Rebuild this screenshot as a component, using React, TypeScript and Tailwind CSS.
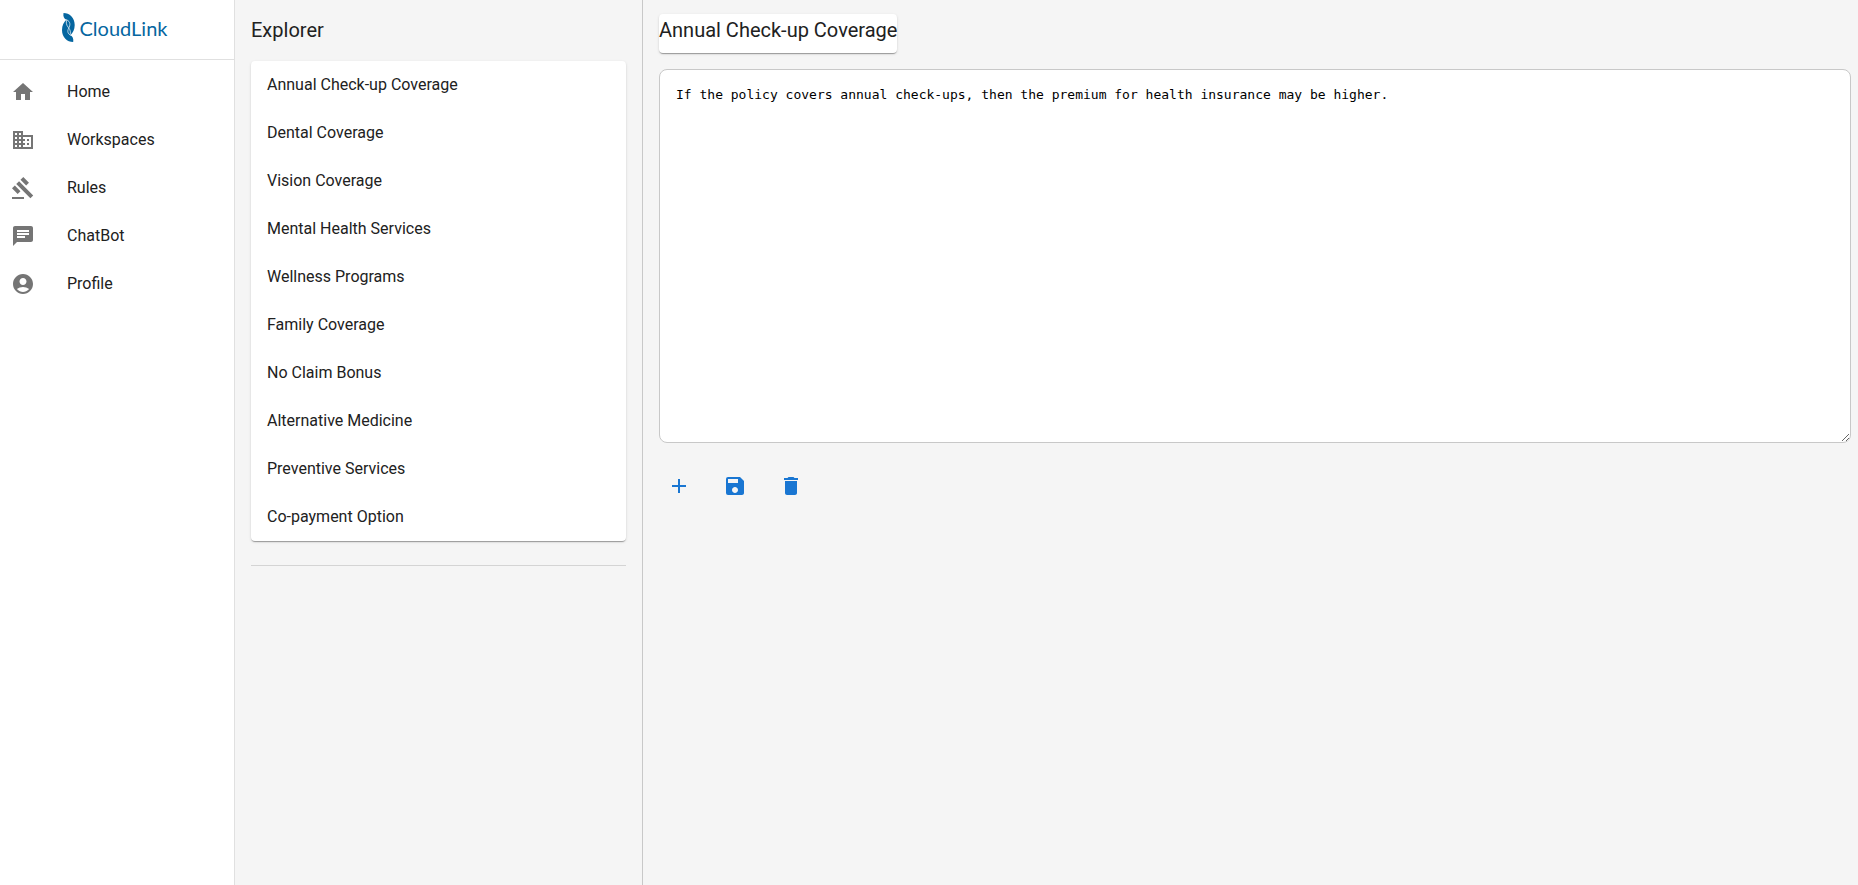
import { useState } from "react";
import type { IconType } from "react-icons";
import {
  MdAccountCircle,
  MdAdd,
  MdBusiness,
  MdChat,
  MdDelete,
  MdGavel,
  MdHome,
  MdSave,
} from "react-icons/md";

const navItems: { label: string; Icon: IconType }[] = [
  { label: "Home", Icon: MdHome },
  { label: "Workspaces", Icon: MdBusiness },
  { label: "Rules", Icon: MdGavel },
  { label: "ChatBot", Icon: MdChat },
  { label: "Profile", Icon: MdAccountCircle },
];

const rules = [
  "Annual Check-up Coverage",
  "Dental Coverage",
  "Vision Coverage",
  "Mental Health Services",
  "Wellness Programs",
  "Family Coverage",
  "No Claim Bonus",
  "Alternative Medicine",
  "Preventive Services",
  "Co-payment Option",
];

const actions: { label: string; Icon: IconType }[] = [
  { label: "Add rule", Icon: MdAdd },
  { label: "Save rule", Icon: MdSave },
  { label: "Delete rule", Icon: MdDelete },
];

function Logo() {
  return (
    <a href="#" className="flex items-center gap-1 text-[#0566a0]">
      <svg viewBox="0 0 13 29" className="h-[29px] w-[13px]" aria-hidden="true">
        <path
          fill="currentColor"
          d="M1.500 0C7.500 0 12.700 4.500 12.700 12C12.700 16.500 10.800 20 8.400 22.200C10.600 23.300 11.800 25.500 11.200 29C5.200 29 0 24.500 0 17C0 12.500 1.900 9 4.300 6.800C2.100 5.700 .9 3.500 1.500 0Z"
        />
        <path
          fill="none"
          stroke="white"
          strokeWidth=".7"
          d="M3.800 6.600C7.500 7.600 8.800 10.500 7.200 14.200C5.300 17.500 5 20.500 8.900 22.400M4.700 7.200C3.900 9.500 4.300 12 6.400 14.500C8.500 17 8.800 19.500 8 21.800"
        />
      </svg>
      <span className="font-['Lato',sans-serif] text-[20px] leading-6">CloudLink</span>
    </a>
  );
}

export default function App() {
  const [selected, setSelected] = useState(rules[0]);
  const [text, setText] = useState(
    "If the policy covers annual check-ups, then the premium for health insurance may be higher.",
  );

  return (
    <div className="flex min-h-screen bg-[#f5f5f5] font-['Roboto',sans-serif] text-base text-[#212121]">
      <aside className="w-[235px] shrink-0 border-r border-[#e0e0e0] bg-white">
        <header className="flex h-[60px] items-center justify-center border-b border-[#e0e0e0] pb-1 pr-1">
          <Logo />
        </header>
        <nav className="py-2">
          <ul>
            {navItems.map(({ label, Icon }) => (
              <li key={label}>
                <a href="#" className="flex h-12 items-center gap-8 px-[11px]">
                  <Icon size={24} className="text-[#757575]" />
                  {label}
                </a>
              </li>
            ))}
          </ul>
        </nav>
      </aside>

      <section className="w-[408px] shrink-0 border-r border-[#c8c8c8] px-4 pt-[14px]">
        <h2 className="text-xl leading-8">Explorer</h2>
        <ul className="mt-[15px] overflow-hidden rounded bg-white shadow-[0_2px_1px_-1px_rgba(0,0,0,0.2),0_1px_1px_0_rgba(0,0,0,0.14),0_1px_3px_0_rgba(0,0,0,0.12)]">
          {rules.map((rule) => (
            <li key={rule}>
              <button
                type="button"
                onClick={() => setSelected(rule)}
                className="flex h-12 w-full items-center px-4 text-left"
              >
                {rule}
              </button>
            </li>
          ))}
        </ul>
        <hr className="mt-6 border-[#d4d4d4]" />
      </section>

      <main className="min-w-0 flex-1 pl-4 pr-[7px] pt-[14px]">
        <h1 className="w-fit rounded bg-white pb-[7px] text-xl leading-8 shadow-[0_2px_1px_-1px_rgba(0,0,0,0.2),0_1px_1px_0_rgba(0,0,0,0.14),0_1px_3px_0_rgba(0,0,0,0.12)]">
          {selected}
        </h1>
        <textarea
          aria-label="Rule text"
          spellCheck={false}
          value={text}
          onChange={(event) => setText(event.target.value)}
          className="mt-4 block h-[374px] w-full resize rounded-lg border border-[#c8c8c8] bg-white p-4 font-['DejaVu_Sans_Mono',monospace] text-[13px] leading-[18px] text-black outline-none"
        />
        <div className="mt-[23px] flex gap-4">
          {actions.map(({ label, Icon }) => (
            <button
              key={label}
              type="button"
              aria-label={label}
              className="flex size-10 items-center justify-center rounded-full text-[#1976d2]"
            >
              <Icon size={24} />
            </button>
          ))}
        </div>
      </main>
    </div>
  );
}
